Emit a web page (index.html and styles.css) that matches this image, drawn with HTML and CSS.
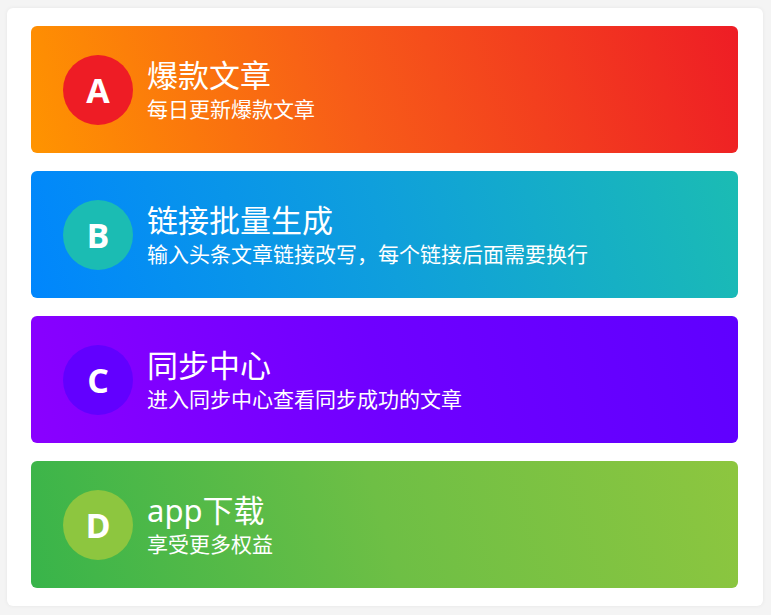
FILE: index.html
```html
<!DOCTYPE html>
<html lang="zh-CN">
<head>
<meta charset="utf-8">
<link rel="stylesheet" href="styles.css">
</head>
<body>
<div class="panel">
  <div class="card card-a">
    <div class="badge">A</div>
    <div class="info">
      <div class="title">爆款文章</div>
      <div class="sub">每日更新爆款文章</div>
    </div>
  </div>
  <div class="card card-b">
    <div class="badge">B</div>
    <div class="info">
      <div class="title">链接批量生成</div>
      <div class="sub">输入头条文章链接改写，每个链接后面需要换行</div>
    </div>
  </div>
  <div class="card card-c">
    <div class="badge">C</div>
    <div class="info">
      <div class="title">同步中心</div>
      <div class="sub">进入同步中心查看同步成功的文章</div>
    </div>
  </div>
  <div class="card card-d">
    <div class="badge">D</div>
    <div class="info">
      <div class="title">app下载</div>
      <div class="sub">享受更多权益</div>
    </div>
  </div>
</div>
</body>
</html>
```
FILE: styles.css
```css
html, body {
  margin: 0;
  padding: 0;
  background: #f4f4f4;
}
body {
  padding: 8px 8px 9px 7px;
  font-family: "Noto Sans", "Noto Sans CJK SC", sans-serif;
}
.panel {
  background: #ffffff;
  border-radius: 6px;
  box-shadow: 0 0 4px rgba(0, 0, 0, 0.06);
  padding: 18px 25px 18px 24px;
  display: flex;
  flex-direction: column;
  gap: 18px;
}
.card {
  height: 127px;
  border-radius: 6px;
  display: flex;
  align-items: center;
  padding-left: 32px;
  color: #ffffff;
}
.badge {
  width: 70px;
  height: 70px;
  border-radius: 50%;
  display: flex;
  align-items: center;
  justify-content: center;
  font-family: "Open Sans", "Noto Sans", sans-serif;
  font-weight: 700;
  font-size: 34px;
  flex-shrink: 0;
}
.info {
  margin-left: 14px;
  display: flex;
  flex-direction: column;
}
.title {
  font-size: 31px;
  line-height: 36px;
}
.sub {
  margin-top: 3px;
  font-size: 21px;
  line-height: 26px;
}
.card-a { background: linear-gradient(74deg, #ff9400, #f75c18 45%, #ee1d25); }
.card-a .badge { background: #ee1c25; }
.card-b { background: linear-gradient(74deg, #0086fd, #0f9fdc 50%, #1bbcb3); }
.card-b .badge { background: #1bbcb3; }
.card-c { background: linear-gradient(74deg, #8a00ff, #6f00ff 50%, #5f00ff); }
.card-c .badge { background: #6200ff; }
.card-d { background: linear-gradient(74deg, #38b44a, #6ebf45 50%, #8dc63f); }
.card-d .badge { background: #8dc63f; }
```
